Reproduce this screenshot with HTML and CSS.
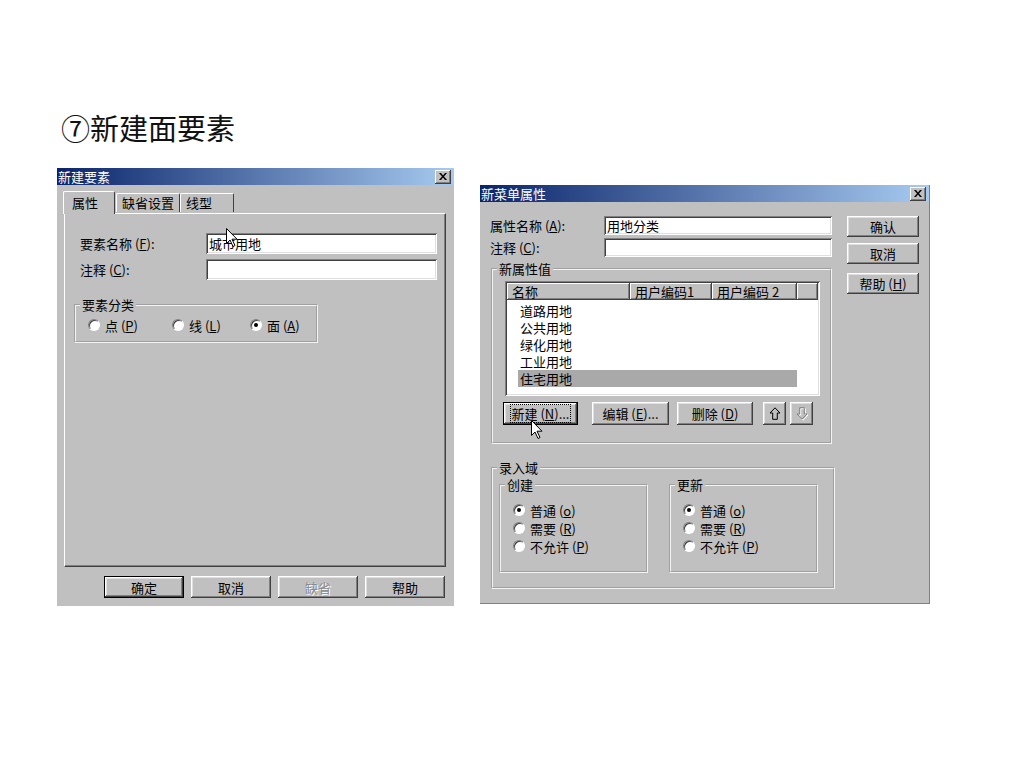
FILE: index.html
```html
<!DOCTYPE html>
<html lang="zh-CN">
<head>
    <meta charset="UTF-8">
    <title>新建面要素</title>
    <link rel="stylesheet" href="styles.css">
</head>
<body>
<div class="slide">
    <h1 class="slide-title">⑦新建面要素</h1>

    <div class="shots">
        <!-- 新建要素 -->
        <div class="dialog dlg-element">
            <div class="titlebar">
                <span>新建要素</span>
                <span class="close"><svg width="8" height="7" viewBox="0 0 8 7"><path d="M0 0h2l2 2.5L6 0h2L5 3.5 8 7H6L4 4.5 2 7H0l3-3.5z" fill="#000"/></svg></span>
            </div>
            <div class="dlg-body">
                <div class="tabs">
                    <div class="tab active">属性</div>
                    <div class="tab">缺省设置</div>
                    <div class="tab tab-wide">线型</div>
                </div>
                <div class="tab-panel">
                    <div class="field-row">
                        <label>要素名称 (<u>F</u>):</label>
                        <div class="input">城市用地</div>
                    </div>
                    <div class="field-row">
                        <label>注释 (<u>C</u>):</label>
                        <div class="input"></div>
                    </div>
                    <fieldset class="group group-kind">
                        <legend>要素分类</legend>
                        <div class="radio-line">
                            <span class="opt opt-1"><i class="radio"></i><span>点 (<u>P</u>)</span></span>
                            <span class="opt opt-2"><i class="radio"></i><span>线 (<u>L</u>)</span></span>
                            <span class="opt"><i class="radio checked"></i><span>面 (<u>A</u>)</span></span>
                        </div>
                    </fieldset>
                </div>
                <div class="button-row">
                    <button class="btn btn-default">确定</button>
                    <button class="btn">取消</button>
                    <button class="btn" disabled>缺省</button>
                    <button class="btn">帮助</button>
                </div>
            </div>
            <svg class="cursor cursor-a" width="12" height="20" viewBox="0 0 12 20"><path d="M0.5 0.5v15l3.5-3.5 3 6.5 2-1-3-6.3h5z" fill="#fff" stroke="#000"/></svg>
        </div>

        <!-- 新菜单属性 -->
        <div class="dialog dlg-menu">
            <div class="titlebar">
                <span>新菜单属性</span>
                <span class="close"><svg width="8" height="7" viewBox="0 0 8 7"><path d="M0 0h2l2 2.5L6 0h2L5 3.5 8 7H6L4 4.5 2 7H0l3-3.5z" fill="#000"/></svg></span>
            </div>
            <div class="dlg-body menu-body">
                <div class="main-col">
                    <div class="field-row">
                        <label>属性名称 (<u>A</u>):</label>
                        <div class="input">用地分类</div>
                    </div>
                    <div class="field-row">
                        <label>注释 (<u>C</u>):</label>
                        <div class="input"></div>
                    </div>

                    <fieldset class="group group-values">
                        <legend>新属性值</legend>
                        <div class="listview">
                            <div class="list-header">
                                <span class="col col-name">名称</span>
                                <span class="col col-c1">用户编码1</span>
                                <span class="col col-c2">用户编码 2</span>
                                <span class="col col-rest"></span>
                            </div>
                            <div class="list-row">道路用地</div>
                            <div class="list-row">公共用地</div>
                            <div class="list-row">绿化用地</div>
                            <div class="list-row">工业用地</div>
                            <div class="list-row selected">住宅用地</div>
                        </div>
                        <div class="list-buttons">
                            <button class="btn btn-new"><span class="focus">新建 (<u>N</u>)...</span></button>
                            <button class="btn btn-edit">编辑 (<u>E</u>)...</button>
                            <button class="btn btn-del">删除 (<u>D</u>)</button>
                            <button class="btn btn-arrow"><svg width="12" height="13" viewBox="0 0 12 13"><path d="M6 0.8l5 5.2H8.3v6.3H3.7V6H1z" fill="none" stroke="#000"/></svg></button>
                            <button class="btn btn-arrow" disabled><svg width="12" height="13" viewBox="0 0 12 13"><path d="M6 12.2l5-5.2H8.3V0.7H3.7V7H1z" fill="none" stroke="#808080"/></svg></button>
                        </div>
                    </fieldset>

                    <fieldset class="group group-input">
                        <legend>录入域</legend>
                        <div class="sub-groups">
                            <fieldset class="group sub-group">
                                <legend>创建</legend>
                                <div class="radio-col">
                                    <span class="opt"><i class="radio checked"></i><span>普通 (<u>o</u>)</span></span>
                                    <span class="opt"><i class="radio"></i><span>需要 (<u>R</u>)</span></span>
                                    <span class="opt"><i class="radio"></i><span>不允许 (<u>P</u>)</span></span>
                                </div>
                            </fieldset>
                            <fieldset class="group sub-group">
                                <legend>更新</legend>
                                <div class="radio-col">
                                    <span class="opt"><i class="radio checked"></i><span>普通 (<u>o</u>)</span></span>
                                    <span class="opt"><i class="radio"></i><span>需要 (<u>R</u>)</span></span>
                                    <span class="opt"><i class="radio"></i><span>不允许 (<u>P</u>)</span></span>
                                </div>
                            </fieldset>
                        </div>
                    </fieldset>
                </div>

                <div class="side-col">
                    <button class="btn btn-side">确认</button>
                    <button class="btn btn-side">取消</button>
                    <button class="btn btn-side btn-help">帮助 (<u>H</u>)</button>
                </div>
            </div>
            <svg class="cursor cursor-b" width="12" height="20" viewBox="0 0 12 20"><path d="M0.5 0.5v15l3.5-3.5 3 6.5 2-1-3-6.3h5z" fill="#fff" stroke="#000"/></svg>
        </div>
    </div>
</div>
</body>
</html>
```

FILE: styles.css
```css
* { box-sizing: border-box; }

body {
    margin: 0;
    background: #fff;
    font-family: "Noto Sans CJK SC", sans-serif;
}

.slide {
    width: 1024px;
    height: 768px;
    padding: 107px 0 0 57px;
}

.slide-title {
    margin: 0 0 0 4px;
    height: 61px;
    font-size: 29px;
    line-height: 40px;
    font-weight: normal;
    color: #111;
}

.shots {
    display: flex;
    align-items: flex-start;
    gap: 26px;
}

/* ---- classic window ---- */
.dialog {
    position: relative;
    background: #c0c0c0;
    font-size: 13px;
    line-height: 15px;
    color: #000;
}

.titlebar {
    height: 17px;
    display: flex;
    align-items: center;
    justify-content: space-between;
    padding: 0 3px 0 1px;
    background: linear-gradient(to right, #0a246a, #a6caf0);
    color: #fff;
}

.close {
    width: 16px;
    height: 14px;
    display: flex;
    align-items: center;
    justify-content: center;
    background: #c0c0c0;
    box-shadow: inset -1px -1px #404040, inset 1px 1px #fff, inset -2px -2px #808080;
}

.btn {
    height: 22px;
    padding: 0;
    border: none;
    background: #c0c0c0;
    font: inherit;
    color: #000;
    box-shadow: inset -1px -1px #404040, inset 1px 1px #fff, inset -2px -2px #808080, inset 2px 2px #dfdfdf;
}

.btn:disabled {
    color: #8a8a8a;
    text-shadow: 1px 1px #fff;
}

.btn-default {
    border: 1px solid #000;
}

.input {
    flex: 1;
    height: 21px;
    padding: 3px 0 0 3px;
    background: #fff;
    box-shadow: inset 1px 1px #808080, inset -1px -1px #fff, inset 2px 2px #404040, inset -2px -2px #dfdfdf;
}

.field-row {
    display: flex;
    align-items: center;
}

.group {
    margin: 0;
    padding: 0;
    border: 2px groove #f4f4f4;
}

.group legend {
    margin-left: 4px;
    padding: 0 2px;
}

.opt {
    display: inline-flex;
    align-items: center;
    gap: 5px;
    height: 18px;
}

.radio {
    position: relative;
    flex: none;
    width: 12px;
    height: 12px;
    border-radius: 50%;
    background: #fff;
    border: 1px solid;
    border-color: #808080 #fff #fff #808080;
    box-shadow: inset 1px 1px #404040;
}

.radio.checked::after {
    content: "";
    position: absolute;
    left: 3px;
    top: 3px;
    width: 4px;
    height: 4px;
    border-radius: 50%;
    background: #000;
}

.cursor {
    position: absolute;
}

/* ---- 新建要素 ---- */
.dlg-element {
    width: 397px;
    height: 438px;
}

.dlg-element .dlg-body {
    padding: 5px 8px 0 7px;
}

.tabs {
    display: flex;
    align-items: flex-end;
    height: 23px;
    margin-left: -1px;
}

.tab {
    height: 19px;
    padding: 1px 5px 0 5px;
    margin-bottom: 1px;
    border: 1px solid;
    border-color: #fff #404040 transparent #fff;
    border-bottom: none;
    border-radius: 2px 2px 0 0;
}

.tab.active {
    position: relative;
    z-index: 1;
    height: 23px;
    width: 52px;
    margin-bottom: -1px;
    margin-right: 1px;
    padding: 3px 0 0 8px;
    background: #c0c0c0;
}

.tab-wide {
    width: 54px;
}

.tab-panel {
    height: 354px;
    padding: 19px 8px 0 15px;
    border: 1px solid;
    border-color: #fff #404040 #404040 #fff;
    box-shadow: inset -1px -1px #808080;
}

.dlg-element .field-row {
    height: 21px;
    margin-bottom: 5px;
}

.dlg-element .field-row label {
    width: 126px;
}

.group-kind {
    width: 244px;
    height: 46px;
    margin: 17px 0 0 -6px;
}

.radio-line {
    display: flex;
    padding: 4px 0 0 12px;
}

.opt-1 { width: 84px; }
.opt-2 { width: 78px; }

.button-row {
    display: flex;
    justify-content: flex-end;
    gap: 7px;
    margin-top: 9px;
    padding-right: 1px;
}

.button-row .btn {
    width: 80px;
}

.cursor-a {
    left: 169px;
    top: 60px;
}

/* ---- 新菜单属性 ---- */
.dlg-menu {
    width: 450px;
    height: 419px;
    margin-top: 17px;
    border-right: 1px solid #808080;
    border-bottom: 1px solid #808080;
}

.menu-body {
    display: flex;
    gap: 12px;
    padding: 14px 0 0 10px;
}

.main-col {
    width: 345px;
}

.dlg-menu .field-row {
    height: 19px;
    margin-bottom: 3px;
}

.dlg-menu .field-row label {
    width: 114px;
}

.dlg-menu .field-row .input {
    flex: none;
    width: 228px;
    height: 19px;
    padding-top: 2px;
}

.group-values {
    width: 341px;
    height: 183px;
    margin: 4px 0 0 1px;
}

.listview {
    width: 315px;
    height: 115px;
    margin: 5px 0 0 12px;
    padding: 2px;
    background: #fff;
    box-shadow: inset 1px 1px #808080, inset -1px -1px #fff, inset 2px 2px #404040, inset -2px -2px #dfdfdf;
}

.list-header {
    display: flex;
    height: 17px;
    margin-bottom: 2px;
}

.col {
    height: 17px;
    padding: 1px 0 0 5px;
    background: #c0c0c0;
    box-shadow: inset -1px -1px #404040, inset 1px 1px #fff, inset -2px -2px #808080;
}

.col-name { width: 123px; }
.col-c1 { width: 82px; }
.col-c2 { width: 85px; }
.col-rest { flex: 1; }

.list-row {
    width: 279px;
    height: 17px;
    margin-left: 11px;
    padding: 1px 0 0 2px;
}

.list-row.selected {
    background: #a9a9a9;
}

.list-buttons {
    display: flex;
    align-items: center;
    margin: 6px 0 0 10px;
}

.list-buttons .btn {
    height: 23px;
}

.btn-new {
    width: 75px;
    border: 1px solid #000;
    margin-right: 14px;
}

.btn-new .focus {
    display: inline-block;
    padding: 1px 1px;
    outline: 1px dotted #000;
}

.btn-edit {
    width: 77px;
    margin-right: 8px;
}

.btn-del {
    width: 76px;
    margin-right: 10px;
}

.btn-arrow {
    width: 23px;
    margin-right: 4px;
    display: flex;
    align-items: center;
    justify-content: center;
}

.btn-arrow:disabled svg {
    filter: drop-shadow(1px 1px 0 #fff);
}

.group-input {
    width: 344px;
    height: 129px;
    margin: 16px 0 0 1px;
}

.sub-groups {
    display: flex;
    gap: 21px;
    margin: 2px 0 0 6px;
}

.sub-group {
    width: 149px;
    height: 96px;
}

.radio-col {
    display: flex;
    flex-direction: column;
    gap: 0;
    padding: 9px 0 0 12px;
}

.side-col {
    display: flex;
    flex-direction: column;
    width: 72px;
}

.btn-side {
    height: 21px;
    margin-bottom: 6px;
}

.btn-help {
    margin-top: 3px;
}

.cursor-b {
    left: 51px;
    top: 235px;
}
```
